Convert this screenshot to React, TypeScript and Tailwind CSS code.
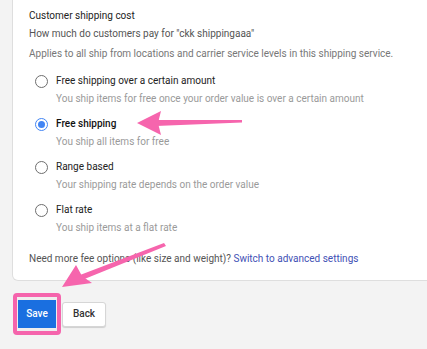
import React from "react";

const options = [
  { label: "Free shipping over a certain amount", sub: "You ship items for free once your order value is over a certain amount", checked: false },
  { label: "Free shipping", sub: "You ship all items for free", checked: true },
  { label: "Range based", sub: "Your shipping rate depends on the order value", checked: false },
  { label: "Flat rate", sub: "You ship items at a flat rate", checked: false },
];

function Radio({ checked }: { checked: boolean }) {
  return checked ? (
    <span className="w-[13px] h-[13px] rounded-full border-[1.5px] border-[#4285f4] flex items-center justify-center shrink-0">
      <span className="w-[7px] h-[7px] rounded-full bg-[#4285f4]" />
    </span>
  ) : (
    <span className="w-[13px] h-[13px] rounded-full border-[1.5px] border-[#6e6e6e] shrink-0" />
  );
}

export default function App() {
  return (
    <div className="relative w-[427px] h-[349px] overflow-hidden bg-[#f3f3f3] text-[10px] leading-[16px]" style={{ fontFamily: "Roboto, 'Liberation Sans', sans-serif" }}>
      <div className="ml-[12px] -mr-[10px] h-[281px] bg-white border border-t-0 border-[#dedede] rounded-bl-[6px] pl-[16px] pt-[8px]">
        <div className="text-[#222]">Customer shipping cost</div>
        <div className="mt-[2px] text-[#555]">How much do customers pay for "ckk shippingaaa"</div>
        <div className="mt-[4px] text-[#777]">Applies to all ship from locations and carrier service levels in this shipping service.</div>
        <div className="mt-[11px] pl-[6px] flex flex-col gap-[9px]">
          {options.map((o) => (
            <div key={o.label} className="flex flex-col">
              <div className="flex items-center gap-[8px] h-[16px]">
                <Radio checked={o.checked} />
                <span className={o.checked ? "text-[#111] font-medium" : "text-[#222]"}>{o.label}</span>
              </div>
              <div className="mt-[2px] pl-[21px] text-[#9a9a9a]">{o.sub}</div>
            </div>
          ))}
        </div>
        <div className="mt-[15px] text-[#555]">
          Need more fee options (like size and weight)? <span className="text-[#3f51b5]">Switch to advanced settings</span>
        </div>
      </div>
      <div className="mt-[12px] ml-[13px] flex items-center gap-[1px]">
        <div className="w-[48px] h-[42px] rounded-[4px] border-[4px] border-[#f564ac] bg-[#eee] flex items-end justify-center pb-[3px]">
          <button className="w-[38px] h-[28px] bg-[#1a6fe0] text-white font-medium text-[10px] flex items-center justify-center">Save</button>
        </div>
        <button className="w-[44px] h-[25px] bg-white border border-[#d6d6d6] rounded-[3px] shadow-[0_1px_1px_rgba(0,0,0,0.15)] text-[#333] text-[10px] font-medium flex items-center justify-center">Back</button>
      </div>
      <svg className="absolute left-0 top-0 pointer-events-none" width="427" height="349">
        <polygon points="242,120 242,122.5 156,126 156,120" fill="#f665ad" />
        <polygon points="137,123 161,111 158,123 161,135" fill="#f665ad" />
        <polygon points="164,243 166,246 82,280 80,275" fill="#f665ad" />
        <polygon points="62,287 76,265 82,276 92,283" fill="#f665ad" />
      </svg>
    </div>
  );
}
